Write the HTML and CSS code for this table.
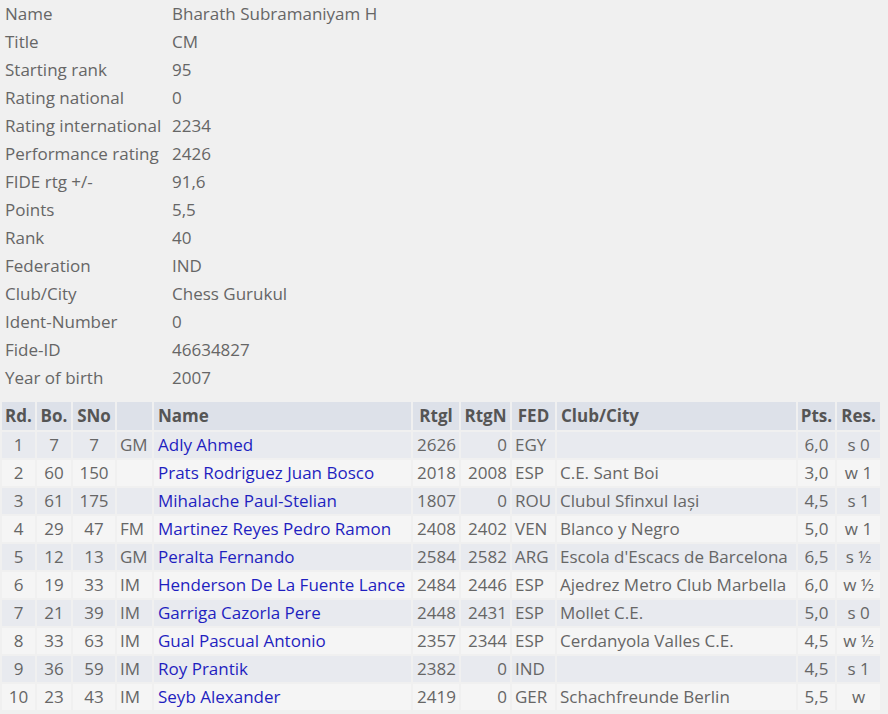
FILE: index.html
```html
<!DOCTYPE html>
<html>
<head>
<meta charset="utf-8">
<link rel="stylesheet" href="styles.css">
</head>
<body>
<div class="info">
  <div class="lbl">Name</div><div class="val">Bharath Subramaniyam H</div>
  <div class="lbl">Title</div><div class="val">CM</div>
  <div class="lbl">Starting rank</div><div class="val">95</div>
  <div class="lbl">Rating national</div><div class="val">0</div>
  <div class="lbl">Rating international</div><div class="val">2234</div>
  <div class="lbl">Performance rating</div><div class="val">2426</div>
  <div class="lbl">FIDE rtg +/-</div><div class="val">91,6</div>
  <div class="lbl">Points</div><div class="val">5,5</div>
  <div class="lbl">Rank</div><div class="val">40</div>
  <div class="lbl">Federation</div><div class="val">IND</div>
  <div class="lbl">Club/City</div><div class="val">Chess Gurukul</div>
  <div class="lbl">Ident-Number</div><div class="val">0</div>
  <div class="lbl">Fide-ID</div><div class="val">46634827</div>
  <div class="lbl">Year of birth</div><div class="val">2007</div>
</div>
<table class="games">
  <colgroup>
    <col class="c-rd"><col class="c-bo"><col class="c-sno"><col class="c-tit"><col class="c-name">
    <col class="c-rtgi"><col class="c-rtgn"><col class="c-fed"><col class="c-club"><col class="c-pts"><col class="c-res">
  </colgroup>
  <thead>
    <tr>
      <th>Rd.</th><th>Bo.</th><th>SNo</th><th></th><th class="l">Name</th>
      <th>Rtgl</th><th>RtgN</th><th>FED</th><th class="l">Club/City</th><th>Pts.</th><th>Res.</th>
    </tr>
  </thead>
  <tbody>
    <tr class="odd"><td class="c">1</td><td class="c">7</td><td class="c">7</td><td class="t">GM</td><td class="n"><a href="#">Adly Ahmed</a></td><td class="r">2626</td><td class="r">0</td><td>EGY</td><td></td><td class="c">6,0</td><td class="c">s 0</td></tr>
    <tr class="even"><td class="c">2</td><td class="c">60</td><td class="c">150</td><td class="t"></td><td class="n"><a href="#">Prats Rodriguez Juan Bosco</a></td><td class="r">2018</td><td class="r">2008</td><td>ESP</td><td>C.E. Sant Boi</td><td class="c">3,0</td><td class="c">w 1</td></tr>
    <tr class="odd"><td class="c">3</td><td class="c">61</td><td class="c">175</td><td class="t"></td><td class="n"><a href="#">Mihalache Paul-Stelian</a></td><td class="r">1807</td><td class="r">0</td><td>ROU</td><td>Clubul Sfinxul Iași</td><td class="c">4,5</td><td class="c">s 1</td></tr>
    <tr class="even"><td class="c">4</td><td class="c">29</td><td class="c">47</td><td class="t">FM</td><td class="n"><a href="#">Martinez Reyes Pedro Ramon</a></td><td class="r">2408</td><td class="r">2402</td><td>VEN</td><td>Blanco y Negro</td><td class="c">5,0</td><td class="c">w 1</td></tr>
    <tr class="odd"><td class="c">5</td><td class="c">12</td><td class="c">13</td><td class="t">GM</td><td class="n"><a href="#">Peralta Fernando</a></td><td class="r">2584</td><td class="r">2582</td><td>ARG</td><td>Escola d'Escacs de Barcelona</td><td class="c">6,5</td><td class="c">s ½</td></tr>
    <tr class="even"><td class="c">6</td><td class="c">19</td><td class="c">33</td><td class="t">IM</td><td class="n"><a href="#">Henderson De La Fuente Lance</a></td><td class="r">2484</td><td class="r">2446</td><td>ESP</td><td>Ajedrez Metro Club Marbella</td><td class="c">6,0</td><td class="c">w ½</td></tr>
    <tr class="odd"><td class="c">7</td><td class="c">21</td><td class="c">39</td><td class="t">IM</td><td class="n"><a href="#">Garriga Cazorla Pere</a></td><td class="r">2448</td><td class="r">2431</td><td>ESP</td><td>Mollet C.E.</td><td class="c">5,0</td><td class="c">s 0</td></tr>
    <tr class="even"><td class="c">8</td><td class="c">33</td><td class="c">63</td><td class="t">IM</td><td class="n"><a href="#">Gual Pascual Antonio</a></td><td class="r">2357</td><td class="r">2344</td><td>ESP</td><td>Cerdanyola Valles C.E.</td><td class="c">4,5</td><td class="c">w ½</td></tr>
    <tr class="odd"><td class="c">9</td><td class="c">36</td><td class="c">59</td><td class="t">IM</td><td class="n"><a href="#">Roy Prantik</a></td><td class="r">2382</td><td class="r">0</td><td>IND</td><td></td><td class="c">4,5</td><td class="c">s 1</td></tr>
    <tr class="even"><td class="c">10</td><td class="c">23</td><td class="c">43</td><td class="t">IM</td><td class="n"><a href="#">Seyb Alexander</a></td><td class="r">2419</td><td class="r">0</td><td>GER</td><td>Schachfreunde Berlin</td><td class="c">5,5</td><td class="c">w</td></tr>
  </tbody>
</table>
</body>
</html>
```
FILE: styles.css
```css
html, body {
  margin: 0;
  padding: 0;
  background: #f0f0f0;
}
body {
  font-family: "Open Sans", "Noto Sans", sans-serif;
  font-size: 17px;
  color: #666;
}
.info {
  display: grid;
  grid-template-columns: 172px auto;
  grid-auto-rows: 28px;
  align-items: center;
  margin-bottom: 8px;
}
.lbl { padding-left: 5px; white-space: nowrap; margin-top: -2px; }
.val { white-space: nowrap; margin-top: -2px; }

.games {
  table-layout: fixed;
  border-collapse: separate;
  border-spacing: 2px;
  width: 882px;
  font-size: 17px;
  color: #666;
}
.c-rd { width: 33px; }
.c-bo { width: 34px; }
.c-sno { width: 42px; }
.c-tit { width: 35px; }
.c-name { width: 257px; }
.c-rtgi { width: 46px; }
.c-rtgn { width: 49px; }
.c-fed { width: 43px; }
.c-club { width: 239px; }
.c-pts { width: 37px; }
.c-res { width: 43px; }

.games th {
  background: #dde1e9;
  color: #555;
  font-weight: bold;
  height: 27px;
  padding: 0 0 1px;
  text-align: center;
  white-space: nowrap;
  overflow: hidden;
}
.games th.l { text-align: left; padding-left: 4px; }
.games td {
  height: 25px;
  padding: 0 3px 1px;
  white-space: nowrap;
  overflow: hidden;
}
.games tr.odd td { background: #e8eaef; }
.games tr.even td { background: #f5f5f5; }
.games td.c { text-align: center; padding: 0 0 1px; }
.games td.r { text-align: right; }
.games td.t { text-align: left; }
.games td.n { padding-left: 4px; }
.games a { color: #1f1fc0; text-decoration: none; }
```
